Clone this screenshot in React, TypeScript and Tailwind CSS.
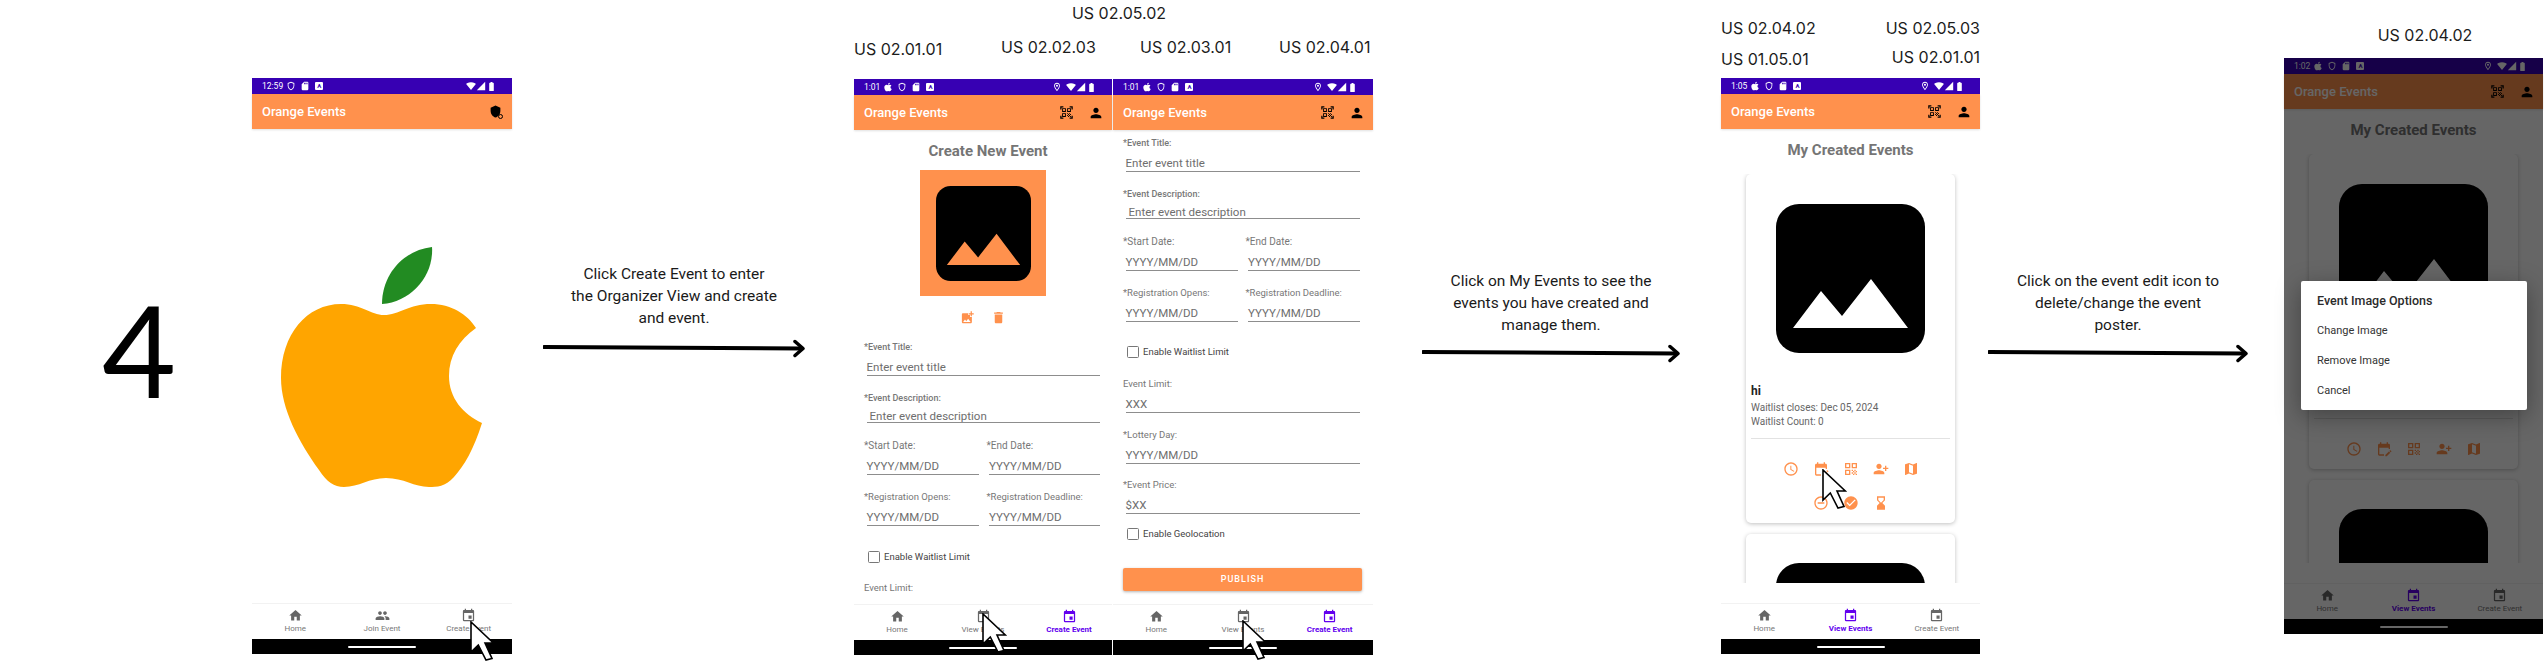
import React from "react";
import { FaApple } from "react-icons/fa";
import {
  MdHome, MdPeople, MdEvent, MdQrCodeScanner, MdPerson, MdAddPhotoAlternate, MdDelete,
  MdOutlineAccessTime, MdEditCalendar, MdQrCode, MdPersonAddAlt1, MdMap, MdOutlineDoNotDisturbOn,
  MdCheckCircle, MdHourglassBottom, MdSignalWifi4Bar, MdSignalCellular4Bar, MdBatteryFull, MdSdCard,
  MdOutlineLocationOn, MdOutlineShield, MdShield,
} from "react-icons/md";

function Label({ children, className = "" }: { children: React.ReactNode; className?: string }) {
  return <div className={"h-6 whitespace-nowrap text-[16px] leading-6 text-[#1c1c1c] [font-family:Inter,sans-serif] " + className}>{children}</div>;
}

function Cursor({ className }: { className: string }) {
  return (
    <svg viewBox="-1 -1 25 41" className={"pointer-events-none absolute z-30 h-[41px] w-[25px] " + className}>
      <path d="M0 0 L0 30 L7.3 23 L15 38 L21 36.5 L14 21 L22.3 21 Z" fill="#fff" stroke="#000" strokeWidth="1.6" strokeLinejoin="miter" />
    </svg>
  );
}

function BoxA() {
  return (
    <span className="flex h-[8px] w-[8px] items-center justify-center rounded-[1px] bg-white text-[6px] font-bold leading-none text-[#3700B3]">A</span>
  );
}

function StatusBar({ time, apple = true, pin = true }: { time: string; apple?: boolean; pin?: boolean }) {
  return (
    <div className="flex h-4 shrink-0 items-center bg-[#3700B3] pl-[10px] pr-[15px] text-white">
      <span className="text-[8.5px] leading-none">{time}</span>
      <div className="ml-[3px] flex items-center gap-[4px]">
        {apple && <FaApple size={10} />}
        <MdOutlineShield size={10} />
        <MdSdCard size={10} />
        <span className="flex w-[10px] justify-center"><BoxA /></span>
      </div>
      <div className="ml-auto flex items-center">
        {pin && <MdOutlineLocationOn size={10} className="mr-[4px]" />}
        <MdSignalWifi4Bar size={10} />
        <MdSignalCellular4Bar size={10} />
        <MdBatteryFull size={11} />
      </div>
    </div>
  );
}

function AppBar({ simple = false }: { simple?: boolean }) {
  return (
    <div className="relative z-10 flex h-[35px] shrink-0 items-center bg-[#FF914D] pl-[10px] pr-[8px] shadow-[0_1px_2px_rgba(0,0,0,0.12)]">
      <span className="text-[13px] font-medium leading-none text-white">Orange Events</span>
      {simple ? (
        <span className="relative ml-auto mr-[1px] flex h-4 w-4 items-center justify-center text-black">
          <MdShield size={13} />
          <span className="absolute bottom-[1px] right-0 h-[5px] w-[5px] rounded-full border border-black bg-[#FF914D]" />
        </span>
      ) : (
        <div className="ml-auto flex items-center gap-[14px] text-black">
          <MdQrCodeScanner size={15} />
          <MdPerson size={16} />
        </div>
      )}
    </div>
  );
}

function BottomNav({ items, active }: { items: [string, React.ReactNode][]; active?: number }) {
  return (
    <>
      <div className="flex h-9 shrink-0 border-t border-[#f2f2f2] bg-white">
        {items.map(([name, icon], i) => (
          <div key={name} className={"flex flex-1 flex-col items-center pt-[4px] " + (i === active ? "text-[#6200EE]" : "text-[#666]")}>
            <span className="flex h-[15px] items-center">{icon}</span>
            <span className={"mt-[1px] whitespace-nowrap text-[8px] leading-[10px] " + (i === active ? "font-bold" : "text-[#777]")}>{name}</span>
          </div>
        ))}
      </div>
      <div className="flex h-[15px] shrink-0 items-center justify-center bg-black">
        <span className="h-[2px] w-[68px] rounded-full bg-white" />
      </div>
    </>
  );
}

function ImagePlaceholder({ size, peak }: { size: number; peak: string }) {
  return (
    <svg viewBox="0 0 149 149" width={size} height={size} className="block shrink-0">
      <rect width="149" height="149" rx="23" fill="#000" />
      <path d="M17 124 L45 87 L66 112 L95 75 L132 124 Z" fill={peak} />
    </svg>
  );
}

function Field({ label, value, short = false, valueIndent = false, labelClass = "text-[9.5px]" }: { label: string; value: string; short?: boolean; valueIndent?: boolean; labelClass?: string }) {
  return (
    <div>
      <div className={"h-3 whitespace-nowrap leading-3 text-[#777] " + labelClass}>{label}</div>
      <div className={"ml-[2.5px] whitespace-nowrap border-b border-[#8d8d8d] text-[11.5px] leading-[14px] text-[#6e6e6e] " + (short ? "mt-[5px] h-[14px]" : "mt-[7px] h-[16px]") + (valueIndent ? " pl-[3px]" : "")}>
        {value}
      </div>
    </div>
  );
}

function Check({ label, className = "" }: { label: string; className?: string }) {
  return (
    <div className={"flex h-3 items-center pl-[4px] " + className}>
      <span className="h-3 w-3 rounded-[1.5px] border-[1.5px] border-[#777]" />
      <span className="ml-[4px] whitespace-nowrap text-[9.5px] leading-3 text-[#444]">{label}</span>
    </div>
  );
}

function FormTop() {
  return (
    <>
      <Field label="*Event Title:" value="Enter event title" labelClass="text-[9px] font-medium" />
      <div className="mt-[16px]">
        <Field label="*Event Description:" value="Enter event description" short valueIndent labelClass="text-[9px] font-medium" />
      </div>
      <div className="mt-[17px] grid grid-cols-[115px_1fr] gap-x-[7.5px] gap-y-[16px]">
        <Field label="*Start Date:" value="YYYY/MM/DD" labelClass="text-[10px]" />
        <Field label="*End Date:" value="YYYY/MM/DD" labelClass="text-[10px]" />
        <Field label="*Registration Opens:" value="YYYY/MM/DD" />
        <Field label="*Registration Deadline:" value="YYYY/MM/DD" />
      </div>
    </>
  );
}

function Phone({ children, className = "" }: { children: React.ReactNode; className?: string }) {
  return <div className={"relative flex h-[576px] flex-col bg-white " + className}>{children}</div>;
}

const createItems = (second: string, secondIcon: React.ReactNode, activeIcon = 15): [string, React.ReactNode][] => [
  ["Home", <MdHome size={activeIcon} />],
  [second, secondIcon],
  ["Create Event", <MdEvent size={activeIcon} />],
];

function EventCard({ twoRows, covered = false }: { twoRows: boolean; covered?: boolean }) {
  return (
    <div className="w-[209px] shrink-0 rounded-[5px] bg-white px-[5px] pb-[12px] pt-[30px] shadow-[0_1px_4px_rgba(0,0,0,0.25)]">
      <div className="flex justify-center"><ImagePlaceholder size={149} peak="#fff" /></div>
      <div className={covered ? "invisible" : ""}>
        <div className="mt-[31px] text-[12px] font-bold leading-[14px] text-[#222]">hi</div>
        <div className="mt-[3px] whitespace-nowrap text-[10px] leading-[14px] text-[#666]">Waitlist closes: Dec 05, 2024</div>
        <div className="whitespace-nowrap text-[10px] leading-[14px] text-[#666]">Waitlist Count: 0</div>
      </div>
      <div className="mt-[9px] h-px bg-[#e2e2e2]" />
      <div className="mt-[22px] flex justify-center gap-[14px] text-[#FF914D]">
        <MdOutlineAccessTime size={16} />
        <MdEditCalendar size={16} />
        <MdQrCode size={16} />
        <MdPersonAddAlt1 size={16} />
        <MdMap size={16} />
      </div>
      {twoRows && (
        <div className="mt-[18px] flex justify-center gap-[14px] text-[#FF914D]">
          <MdOutlineDoNotDisturbOn size={16} />
          <MdCheckCircle size={16} />
          <MdHourglassBottom size={16} />
        </div>
      )}
    </div>
  );
}

function EventsContent({ twoRows, covered = false }: { twoRows: boolean; covered?: boolean }) {
  return (
    <div className="flex min-h-0 flex-1 flex-col pb-5">
      <div className="pt-3 text-center text-[15px] font-bold leading-[18px] text-[#757575]">My Created Events</div>
      <div className="mt-[15px] flex min-h-0 flex-1 flex-col items-center gap-[11px] overflow-hidden px-2 pb-1">
        <EventCard twoRows={twoRows} covered={covered} />
        <div className="w-[209px] shrink-0 rounded-[5px] bg-white pb-[12px] pt-[29px] shadow-[0_1px_4px_rgba(0,0,0,0.25)]">
          <div className="flex justify-center"><ImagePlaceholder size={149} peak="#fff" /></div>
        </div>
      </div>
    </div>
  );
}

function Caption({ lines, className, arrowClass, arrowWidth }: { lines: string[]; className: string; arrowClass: string; arrowWidth: number }) {
  return (
    <div className={"flex shrink-0 flex-col items-center " + className}>
      <div className="text-center text-[15.5px] leading-[22px] text-[#1a1a1a]">
        {lines.map((l) => <div key={l} className="whitespace-nowrap">{l}</div>)}
      </div>
      <svg viewBox={`0 0 ${arrowWidth} 20`} width={arrowWidth} height={20} className={"block " + arrowClass}>
        <path d={`M1 9 L${arrowWidth - 3} 10.5`} stroke="#000" strokeWidth="4" strokeLinecap="round" fill="none" />
        <path d={`M${arrowWidth - 10} 3.5 L${arrowWidth - 2} 10.5 L${arrowWidth - 10} 17.5`} stroke="#000" strokeWidth="3.5" strokeLinecap="round" strokeLinejoin="round" fill="none" />
      </svg>
    </div>
  );
}

export default function App() {
  const viewNav: [string, React.ReactNode][] = createItems("View Events", <MdEvent size={15} />);
  return (
    <div className="flex h-[661px] w-[2544px] items-start overflow-hidden bg-white [font-family:Roboto,sans-serif]">
      {/* big number */}
      <div className="w-[252px] shrink-0 pt-[274px] pl-[102px] text-[128px] leading-[150px] text-black [font-family:Lato,sans-serif]">4</div>

      {/* splash phone */}
      <div className="w-[260px] shrink-0 pt-[78px]">
        <Phone>
          <StatusBar time="12:59" apple={false} pin={false} />
          <AppBar simple />
          <div className="flex min-h-0 flex-1 items-center justify-center">
            <svg viewBox="0 0 205 245" width={205} height={245} className="-ml-[2px] block">
              <path d="M103 60 C103 30 125 6 153 3 C155 32 132 58 103 60 Z" fill="#228B22" />
              <path d="M105 71 C120 71 130 60 152 60 C172 60 188 70 197 84 C180 96 170 112 170 132 C170 154 184 170 203 179 C195 205 185 222 175 233 C166 243 158 243 150 243 C135 243 125 234 107 234 C90 234 80 243 65 243 C55 243 48 238 40 226 C20 198 2 165 2 134 C2 90 28 60 62 60 C82 60 92 71 105 71 Z" fill="#FFA500" />
            </svg>
          </div>
          <BottomNav items={createItems("Join Event", <MdPeople size={15} />)} />
          <Cursor className="left-[218px] top-[543px]" />
        </Phone>
      </div>

      <Caption
        lines={["Click Create Event to enter", "the Organizer View and create", "and event."]}
        className="ml-[31px] mr-[49px] w-[262px] pt-[263px]"
        arrowClass="mt-[9px]"
        arrowWidth={262}
      />

      {/* form pair */}
      <div className="w-[519px] shrink-0">
        <div className="h-[78px]">
          <Label className="mt-[1px] pl-[11px] text-center">US 02.05.02</Label>
          <div className="mt-[10px] flex">
            <Label className="mt-[2px] w-[147px]">US 02.01.01</Label>
            <Label className="w-[139px]">US 02.02.03</Label>
            <Label className="w-[139px]">US 02.03.01</Label>
            <Label>US 02.04.01</Label>
          </div>
        </div>
        <div className="flex gap-px">
          <Phone className="w-[258px]">
            <StatusBar time="1:01" />
            <AppBar />
            <div className="min-h-0 flex-1 overflow-hidden">
              <div className="pl-[10px] pt-3 text-center text-[15px] font-bold leading-[18px] text-[#757575]">Create New Event</div>
              <div className="mx-auto mt-[10px] flex h-[126px] w-[126px] items-center justify-center bg-[#FF914D]">
                <ImagePlaceholder size={95} peak="#FF914D" />
              </div>
              <div className="mt-[14px] flex h-[15px] justify-center gap-4 text-[#FF914D]">
                <MdAddPhotoAlternate size={15} />
                <MdDelete size={15} />
              </div>
              <div className="mt-[16px] pl-[10px] pr-[12px]">
                <FormTop />
                <Check label="Enable Waitlist Limit" className="mt-[25px]" />
                <div className="mt-[19px] text-[9.5px] leading-3 text-[#777]">Event Limit:</div>
              </div>
            </div>
            <BottomNav items={viewNav} active={2} />
            <Cursor className="left-[128px] top-[534px]" />
          </Phone>
          <Phone className="w-[260px]">
            <StatusBar time="1:01" />
            <AppBar />
            <div className="min-h-0 flex-1 overflow-hidden pl-[10px] pr-[13px] pt-[7px]">
              <FormTop />
              <Check label="Enable Waitlist Limit" className="mt-[24px]" />
              <div className="mt-[20px]"><Field label="Event Limit:" value="XXX" /></div>
              <div className="mt-[16px]"><Field label="*Lottery Day:" value="YYYY/MM/DD" /></div>
              <div className="mt-[15px]"><Field label="*Event Price:" value="$XX" /></div>
              <Check label="Enable Geolocation" className="mt-[14px]" />
              <div className="-mr-[2px] mt-[28px] flex h-[23px] items-center justify-center rounded-[2px] bg-[#FF914D] text-[9px] font-medium tracking-[1px] text-white shadow-[0_1px_3px_rgba(0,0,0,0.3)]">PUBLISH</div>
            </div>
            <BottomNav items={viewNav} active={2} />
            <Cursor className="left-[129px] top-[541px]" />
          </Phone>
        </div>
      </div>

      <Caption
        lines={["Click on My Events to see the", "events you have created and", "manage them."]}
        className="ml-[49px] mr-[41px] w-[258px] pt-[270px]"
        arrowClass="mt-[7px]"
        arrowWidth={258}
      />

      {/* my events */}
      <div className="w-[259px] shrink-0">
        <div className="h-[78px] pt-4">
          <div className="flex justify-between"><Label>US 02.04.02</Label><Label>US 02.05.03</Label></div>
          <div className="mt-[6px] flex justify-between"><Label className="mt-[1px]">US 01.05.01</Label><Label className="-mt-[1px]">US 02.01.01</Label></div>
        </div>
        <Phone>
          <StatusBar time="1:05" />
          <AppBar />
          <EventsContent twoRows />
          <BottomNav items={[["Home", <MdHome size={15} />], ["View Events", <MdEvent size={15} />], ["Create Event", <MdEvent size={15} />]]} active={1} />
          <Cursor className="left-[101px] top-[391px]" />
        </Phone>
      </div>

      <Caption
        lines={["Click on the event edit icon to", "delete/change the event", "poster."]}
        className="ml-[8px] mr-[36px] w-[260px] pt-[270px]"
        arrowClass="mt-[7px]"
        arrowWidth={260}
      />

      {/* dialog */}
      <div className="w-[259px] shrink-0">
        <div className="h-[58px] pt-[23px]"><Label className="pl-[23px] text-center">US 02.04.02</Label></div>
        <Phone className="h-[575px]">
          <StatusBar time="1:02" />
          <AppBar />
          <EventsContent twoRows={false} covered />
          <BottomNav items={[["Home", <MdHome size={15} />], ["View Events", <MdEvent size={15} />], ["Create Event", <MdEvent size={15} />]]} active={1} />
          <div className="absolute inset-0 z-20 bg-black/60" />
          <div className="absolute left-[17px] top-[223px] z-30 h-[129px] w-[226px] rounded-[2px] bg-white pl-4 shadow-[0_6px_24px_rgba(0,0,0,0.35)]">
            <div className="pt-[12px] text-[12.5px] font-medium leading-[15px] text-[#2b2b2b]">Event Image Options</div>
            <div className="mt-[16px] text-[11px] leading-[13px] text-[#333]">Change Image</div>
            <div className="mt-[17px] text-[11px] leading-[13px] text-[#333]">Remove Image</div>
            <div className="mt-[17px] text-[11px] leading-[13px] text-[#333]">Cancel</div>
          </div>
        </Phone>
      </div>
    </div>
  );
}
